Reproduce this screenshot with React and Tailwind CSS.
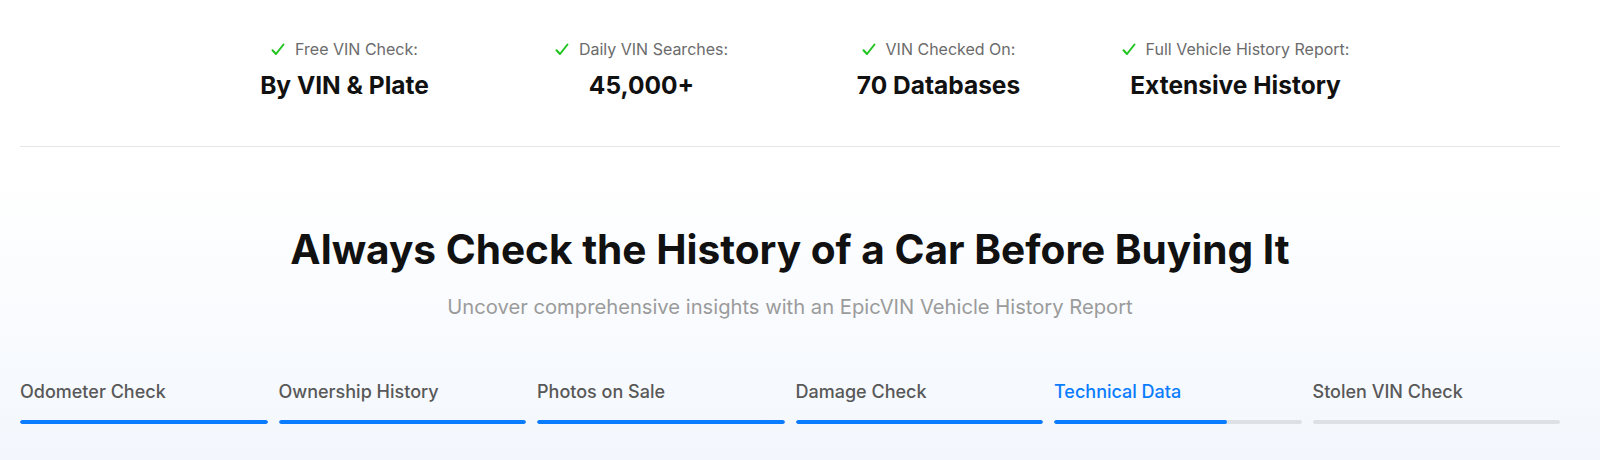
const stats = [
  { label: 'Free VIN Check:', value: 'By VIN & Plate' },
  { label: 'Daily VIN Searches:', value: '45,000+' },
  { label: 'VIN Checked On:', value: '70 Databases' },
  { label: 'Full Vehicle History Report:', value: 'Extensive History' },
];

const tabs = [
  { name: 'Odometer Check', progress: 100 },
  { name: 'Ownership History', progress: 100 },
  { name: 'Photos on Sale', progress: 100 },
  { name: 'Damage Check', progress: 100 },
  { name: 'Technical Data', progress: 70, active: true },
  { name: 'Stolen VIN Check', progress: 0 },
];

const App = () => {
  return (
    <div className="w-[1600px] h-[460px] overflow-hidden bg-white font-['Inter',sans-serif]">
      <div className="pl-5 pr-10">
        <div className="mx-auto w-[1188px] pt-[37px] grid grid-cols-4">
          {stats.map((s) => (
            <div key={s.label} className="flex flex-col items-center">
              <div className="flex items-center gap-[10px] text-[16px] leading-6 text-[#6b6b6b]">
                <svg width="14" height="13" viewBox="0 0 14 13" fill="none">
                  <path d="M1.5 7.2 L5 11 L12.5 1.5" stroke="#1fc41f" strokeWidth="2" strokeLinecap="round" strokeLinejoin="round" />
                </svg>
                <span>{s.label}</span>
              </div>
              <div className="mt-2 text-[24.5px] leading-8 font-bold text-[#111]">{s.value}</div>
            </div>
          ))}
        </div>
        <div className="mt-[45px] h-px bg-[#e6e6e6]" />
      </div>

      <section className="h-[313px] bg-gradient-to-b from-white from-[10%] to-[#f3f7fd] pl-5 pr-10 pt-[79px]">
        <h2 className="text-center text-[40.6px] leading-[48px] font-bold text-[#111]">
          Always Check the History of a Car Before Buying It
        </h2>
        <p className="mt-[19px] text-center text-[20.2px] leading-7 text-[#9b9b9b]">
          Uncover comprehensive insights with an EpicVIN Vehicle History Report
        </p>

        <div className="mt-[59px] grid grid-cols-6 gap-[11px]">
          {tabs.map((t) => (
            <div key={t.name}>
              <div
                className={
                  t.active
                    ? 'text-[18px] leading-6 font-medium text-[#0a7cff]'
                    : 'text-[18px] leading-6 font-medium text-[#585858]'
                }
              >
                {t.name}
              </div>
              <div className="mt-[16px] h-1 rounded-full bg-[#dde1e6] overflow-hidden">
                <div className="h-full rounded-full bg-[#0a7cff]" style={{ width: `${t.progress}%` }} />
              </div>
            </div>
          ))}
        </div>
      </section>
    </div>
  );
};

export default App;
